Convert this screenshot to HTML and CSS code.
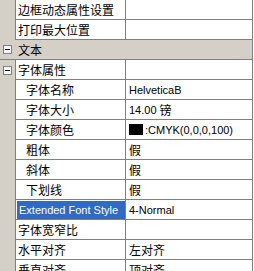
FILE: index.html
```html
<!DOCTYPE html>
<html lang="zh">

<head>
  <meta charset="UTF-8">
  <title>属性</title>
  <link rel="stylesheet" href="styles.css">
</head>

<body>
  <div class="grid">
    <div class="row">
      <div class="gutter"></div>
      <div class="name">边框动态属性设置</div>
      <div class="value"></div>
    </div>
    <div class="row">
      <div class="gutter"></div>
      <div class="name">打印最大位置</div>
      <div class="value"></div>
    </div>
    <div class="row category">
      <div class="gutter"><span class="toggle"></span></div>
      <div class="name">文本</div>
    </div>
    <div class="row">
      <div class="gutter"><span class="toggle"></span></div>
      <div class="name">字体属性</div>
      <div class="value"></div>
    </div>
    <div class="row">
      <div class="gutter"></div>
      <div class="name child">字体名称</div>
      <div class="value"><span class="lat">HelveticaB</span></div>
    </div>
    <div class="row">
      <div class="gutter"></div>
      <div class="name child">字体大小</div>
      <div class="value"><span class="lat">14.00&nbsp;</span>镑</div>
    </div>
    <div class="row">
      <div class="gutter"></div>
      <div class="name child">字体颜色</div>
      <div class="value"><span class="swatch"></span><span class="lat">:CMYK(0,0,0,100)</span></div>
    </div>
    <div class="row">
      <div class="gutter"></div>
      <div class="name child">粗体</div>
      <div class="value">假</div>
    </div>
    <div class="row">
      <div class="gutter"></div>
      <div class="name child">斜体</div>
      <div class="value">假</div>
    </div>
    <div class="row">
      <div class="gutter"></div>
      <div class="name child">下划线</div>
      <div class="value">假</div>
    </div>
    <div class="row">
      <div class="gutter"></div>
      <div class="name"><span class="selected lat">Extended Font Style</span></div>
      <div class="value"><span class="lat">4-Normal</span></div>
    </div>
    <div class="row">
      <div class="gutter"></div>
      <div class="name">字体宽窄比</div>
      <div class="value"></div>
    </div>
    <div class="row">
      <div class="gutter"></div>
      <div class="name">水平对齐</div>
      <div class="value">左对齐</div>
    </div>
    <div class="row">
      <div class="gutter"></div>
      <div class="name">垂直对齐</div>
      <div class="value">顶对齐</div>
    </div>
  </div>
</body>

</html>
```

FILE: styles.css
```css
/* document */
* {
  box-sizing: border-box;
}

body {
  margin: 0;
  background: #fff;
  font-family: "Liberation Sans", "Noto Sans CJK SC", sans-serif;
  font-size: 12px;
  color: #000;
  overflow: hidden;
}

.lat {
  font-size: 11px;
}

/* property grid */
.grid {
  width: 253px;
  border-right: 1px solid #808080;
  background: #fff;
}

.row {
  display: flex;
  height: 20px;
}

.gutter {
  width: 16px;
  flex: none;
  background: #d4d0c8;
  border-right: 1px solid #808080;
  display: flex;
  align-items: center;
  padding-left: 3px;
}

.name {
  width: 110px;
  flex: none;
  border-right: 1px solid #808080;
  border-bottom: 1px solid #808080;
  padding: 0 0 0 2px;
  display: flex;
  align-items: center;
  white-space: nowrap;
  overflow: hidden;
}

.name.child {
  padding-left: 10px;
}

.value {
  flex: 1;
  border-bottom: 1px solid #808080;
  padding-left: 3px;
  display: flex;
  align-items: center;
  white-space: nowrap;
  overflow: hidden;
}

.selected {
  background: #316ac5;
  color: #fff;
  height: 18px;
  line-height: 18px;
  margin-left: -1px;
  padding: 0 4px 0 2px;
  flex: 1;
}

/* category rows */
.category {
  background: #d4d0c8;
}

.category .gutter {
  border-right: none;
  border-bottom: 1px solid #808080;
}

.category .name {
  flex: 1;
  border-right: none;
}

.toggle {
  width: 9px;
  height: 9px;
  border: 1px solid #808080;
  background: #fff;
  position: relative;
}

.toggle::after {
  content: "";
  position: absolute;
  left: 1px;
  top: 3px;
  width: 5px;
  height: 1px;
  background: #000;
}

.swatch {
  width: 14px;
  height: 11px;
  background: #000;
  margin-right: 2px;
}
```
